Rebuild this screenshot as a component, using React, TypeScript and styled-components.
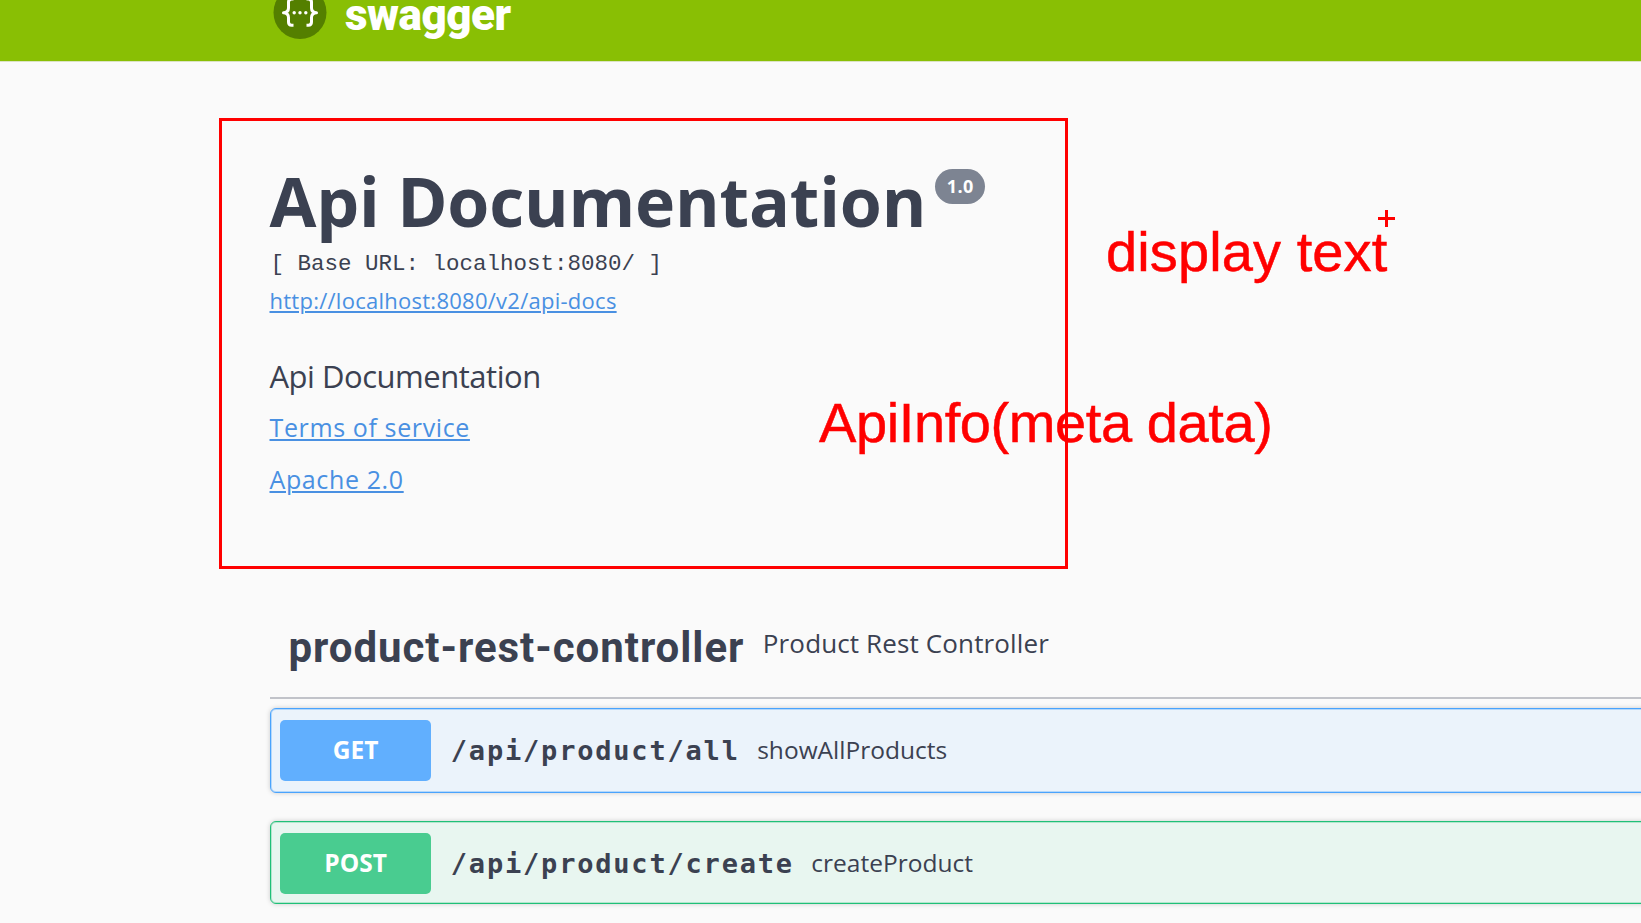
import React from 'react';
import styled, { createGlobalStyle } from 'styled-components';

const GlobalStyle = createGlobalStyle`
  * { box-sizing: border-box; }
  html, body { margin: 0; padding: 0; background: #fafafa; overflow: hidden; }
  body { font-family: "Open Sans", sans-serif; color: #3b4151; }
`;

const Page = styled.div`
  position: relative;
  width: 1641px;
  height: 923px;
  overflow: hidden;
  background: #fafafa;
`;

const Topbar = styled.header`
  height: 62px;
  padding-left: 273px;
  background: #89bf04;
  border-bottom: 1px solid #dbe3c4;
  display: flex;
  align-items: flex-start;
`;

const LogoMark = styled.svg`
  display: block;
  flex: none;
  width: 54px;
  height: 54px;
  margin-top: -15px;
`;

const Brand = styled.span`
  margin: 0 0 0 18px;
  font: 900 44px/31px Roboto, sans-serif;
  letter-spacing: -0.5px;
  color: #fff;
`;

const InfoFrame = styled.section`
  width: 849px;
  height: 451px;
  margin: 56px 0 0 219px;
  padding: 39px 0 0 47.5px;
  border: 3px solid #ff0000;
  display: flex;
  flex-direction: column;
  align-items: flex-start;
`;

const TitleRow = styled.div`
  display: flex;
  align-items: flex-start;
`;

const Title = styled.h1`
  margin: 0;
  font-size: 68px;
  font-weight: 700;
  line-height: 81px;
  letter-spacing: -0.18px;
  white-space: nowrap;
`;

const Version = styled.span`
  margin: 9px 0 0 9px;
  width: 50px;
  height: 35px;
  border-radius: 17.5px;
  background: #7d8492;
  color: #fff;
  font-size: 18px;
  font-weight: 700;
  line-height: 35px;
  letter-spacing: 0.4px;
  text-align: center;
`;

const BaseUrl = styled.pre`
  margin: 8px 0 0 1px;
  font: 400 22.5px/30px "Liberation Mono", monospace;
`;

const DocLink = styled.a`
  margin-top: 6px;
  font-size: 22px;
  line-height: 30px;
  letter-spacing: 0.26px;
  color: #4990e2;
  text-decoration: underline;
  text-decoration-thickness: 1.5px;
  text-underline-offset: 2px;
`;

const Description = styled.p`
  margin: 41px 0 0;
  font-size: 31px;
  line-height: 40px;
  letter-spacing: -0.48px;
`;

const MetaLink = styled(DocLink)<{ $gap: number }>`
  margin-top: ${p => p.$gap}px;
  font-size: 25px;
  line-height: 34px;
  letter-spacing: 0.62px;
`;

const TagSection = styled.main`
  margin: 52px 0 0 270px;
`;

const TagHeader = styled.div`
  height: 78px;
  padding-left: 18.5px;
  border-bottom: 2px solid #c1c3c9;
  display: flex;
  align-items: flex-start;
`;

const TagName = styled.h2`
  margin: 0;
  font: 700 42px/53px Roboto, sans-serif;
  letter-spacing: 0.95px;
`;

const TagText = styled.span`
  margin: 2px 0 0 18.5px;
  font-size: 26px;
  line-height: 40px;
  letter-spacing: 0.13px;
`;

const Operation = styled.div<{ $edge: string; $soft: string; $fill: string; $height: number }>`
  height: ${p => p.$height}px;
  margin-right: -20px;
  padding: 10.5px 0 0 9.3px;
  border: 1px solid ${p => p.$edge};
  border-radius: 6px;
  background: ${p => p.$fill};
  box-shadow: inset 0 0 0 1px ${p => p.$soft}, 0 0 5px rgba(0, 0, 0, 0.19);
  display: flex;
  align-items: flex-start;
`;

const Operations = styled.div`
  display: flex;
  flex-direction: column;
  gap: 28px;
  margin-top: 9px;
`;

const Method = styled.span<{ $color: string }>`
  width: 150.5px;
  height: 61.5px;
  border-radius: 5px;
  background: ${p => p.$color};
  color: #fff;
  font-size: 24.5px;
  font-weight: 700;
  line-height: 60px;
  text-align: center;
`;

const Path = styled.span`
  margin-left: 20px;
  font: 700 27px/61px "DejaVu Sans Mono", monospace;
  letter-spacing: 1.8px;
`;

const Summary = styled.span`
  margin-left: 17.5px;
  font-size: 24.5px;
  line-height: 60px;
`;

const Note = styled.span<{ $x: number; $y: number; $spacing: number }>`
  position: absolute;
  left: ${p => p.$x}px;
  top: ${p => p.$y}px;
  font: 400 56px/64px "Liberation Sans", sans-serif;
  letter-spacing: ${p => p.$spacing}px;
  -webkit-text-stroke: 0.5px #ff0000;
  color: #ff0000;
  white-space: nowrap;
`;

const CrossMark = styled.svg`
  position: absolute;
  left: 1378px;
  top: 210px;
`;

const operations = [
  { method: 'GET', path: '/api/product/all', summary: 'showAllProducts', color: '#61affe', edge: '#49a3fd', soft: '#b4d8fb', fill: '#ebf3fb', height: 85 },
  { method: 'POST', path: '/api/product/create', summary: 'createProduct', color: '#49cc90', edge: '#1fc078', soft: '#b3e6cd', fill: '#e8f6f0', height: 83 },
];

export default function App() {
  return (
    <Page>
      <GlobalStyle />
      <Topbar>
        <LogoMark viewBox="0 0 54 54">
          <circle cx="27" cy="27.5" r="26.5" fill="#547f00" />
          <g fill="none" stroke="#fff" strokeWidth="3" strokeLinejoin="round">
            <path d="M20.500 14h-1.800q-3.200 0-3.200 3.200v5.800q0 4.500-5 4.800q5 .3 5 4.800v4.500q0 3.200 3.200 3.200h1.800" />
            <path d="M33.500 14h1.800q3.200 0 3.200 3.200v5.800q0 4.500 5 4.800q-5 .3-5 4.800v4.500q0 3.200-3.200 3.200h-1.800" />
          </g>
          <g fill="#fff">
            <circle cx="21.200" cy="27.800" r="1.700" />
            <circle cx="27" cy="27.800" r="1.700" />
            <circle cx="32.800" cy="27.800" r="1.700" />
          </g>
        </LogoMark>
        <Brand>swagger</Brand>
      </Topbar>
      <InfoFrame>
        <TitleRow>
          <Title>Api Documentation</Title>
          <Version>1.0</Version>
        </TitleRow>
        <BaseUrl>[ Base URL: localhost:8080/ ]</BaseUrl>
        <DocLink>http://localhost:8080/v2/api-docs</DocLink>
        <Description>Api Documentation</Description>
        <MetaLink $gap={14}>Terms of service</MetaLink>
        <MetaLink $gap={18}>Apache 2.0</MetaLink>
      </InfoFrame>
      <TagSection>
        <TagHeader>
          <TagName>product-rest-controller</TagName>
          <TagText>Product Rest Controller</TagText>
        </TagHeader>
        <Operations>
          {operations.map(op => (
            <Operation key={op.method} $edge={op.edge} $soft={op.soft} $fill={op.fill} $height={op.height}>
              <Method $color={op.color}>{op.method}</Method>
              <Path>{op.path}</Path>
              <Summary>{op.summary}</Summary>
            </Operation>
          ))}
        </Operations>
      </TagSection>
      <Note $x={1106} $y={220} $spacing={0.1}>display text</Note>
      <Note $x={819} $y={391} $spacing={-0.4}>ApiInfo(meta data)</Note>
      <CrossMark width="17" height="17" viewBox="0 0 17 17">
        <path d="M0 8.500h17M8.500 0v17" stroke="#ff0000" strokeWidth="3" />
      </CrossMark>
    </Page>
  );
}
